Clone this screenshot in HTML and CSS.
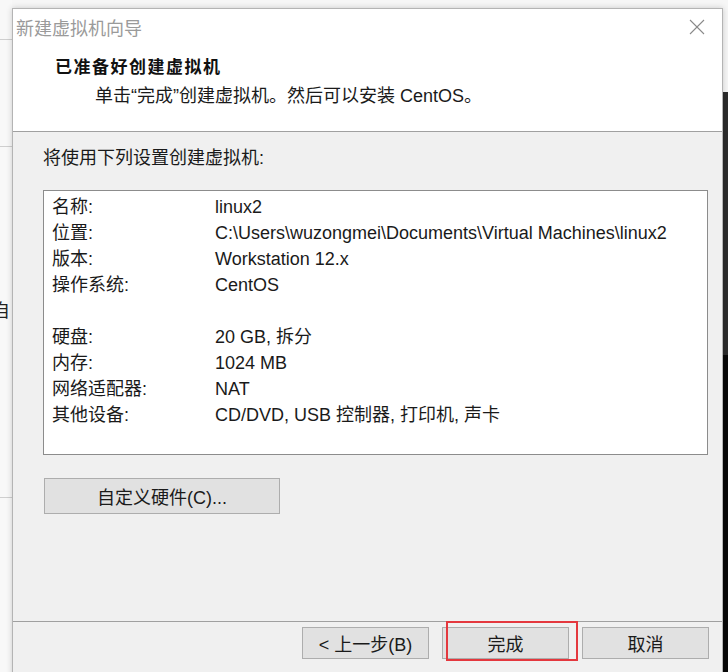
FILE: index.html
```html
<!DOCTYPE html>
<html lang="zh-CN">
<head>
  <meta charset="UTF-8" />
  <meta name="viewport" content="width=device-width, initial-scale=1.0" />
  <title>新建虚拟机向导</title>
  <link rel="stylesheet" href="styles.css">
</head>
<body>
  <div class="desktop">
    <!-- windows behind the wizard -->
    <div class="back-window">
      <div class="back-line l1"></div>
      <div class="back-line l2"></div>
      <div class="back-line l3"></div>
      <div class="back-text">项自</div>
    </div>
    <div class="dark-window">
      <div class="dark-top"></div>
      <div class="dark-bottom"></div>
    </div>

    <div class="dialog">
      <div class="titlebar">
        <span class="title">新建虚拟机向导</span>
        <svg class="close" width="16" height="16" viewBox="0 0 16 16">
          <line x1="1" y1="1" x2="15" y2="15" stroke="#8a8a8a" stroke-width="1.1" />
          <line x1="15" y1="1" x2="1" y2="15" stroke="#8a8a8a" stroke-width="1.1" />
        </svg>
      </div>

      <div class="header">
        <div class="heading">已准备好创建虚拟机</div>
        <div class="subheading">单击“完成”创建虚拟机。然后可以安装 CentOS。</div>
      </div>

      <div class="content">
        <div class="intro">将使用下列设置创建虚拟机:</div>
        <div class="summary">
          <div class="row"><span class="label">名称:</span><span>linux2</span></div>
          <div class="row"><span class="label">位置:</span><span>C:\Users\wuzongmei\Documents\Virtual Machines\linux2</span></div>
          <div class="row"><span class="label">版本:</span><span>Workstation 12.x</span></div>
          <div class="row"><span class="label">操作系统:</span><span>CentOS</span></div>
          <div class="row"></div>
          <div class="row"><span class="label">硬盘:</span><span>20 GB, 拆分</span></div>
          <div class="row"><span class="label">内存:</span><span>1024 MB</span></div>
          <div class="row"><span class="label">网络适配器:</span><span>NAT</span></div>
          <div class="row"><span class="label">其他设备:</span><span>CD/DVD, USB 控制器, 打印机, 声卡</span></div>
        </div>
        <button class="btn custom">自定义硬件(C)...</button>
      </div>

      <div class="footer">
        <button class="btn">&lt; 上一步(B)</button>
        <button class="btn finish">完成<span class="highlight"></span></button>
        <button class="btn">取消</button>
      </div>
    </div>
  </div>
</body>
</html>
```

FILE: styles.css
```css
* {
  box-sizing: border-box;
}
body {
  margin: 0;
  font-family: 'Liberation Sans', 'Noto Sans CJK SC', sans-serif;
  background-color: #f6f6f6;
  color: #1a1a1a;
}
.desktop {
  position: relative;
  width: 728px;
  height: 672px;
  overflow: hidden;
  background-color: #f6f6f6;
}
.back-window {
  position: absolute;
  left: 0;
  top: 0;
  width: 12px;
  height: 672px;
  background-color: #f8f8f8;
}
.back-line {
  position: absolute;
  left: 0;
  width: 12px;
  height: 1px;
  background-color: #cfcfcf;
}
.back-line.l1 { top: 39px; }
.back-line.l2 { top: 146px; }
.back-line.l3 { top: 497px; }
.back-text {
  position: absolute;
  left: -26px;
  top: 296px;
  font-size: 18px;
  color: #222;
}
.dark-window {
  position: absolute;
  left: 723px;
  top: 92px;
  width: 10px;
  height: 580px;
  display: flex;
  flex-direction: column;
}
.dark-top {
  height: 263px;
  background-color: #2c2c2c;
}
.dark-bottom {
  flex: 1;
  background-color: #080808;
}
.dialog {
  position: absolute;
  left: 12px;
  top: 8px;
  width: 711px;
  height: 680px;
  border: 1px solid #b4b4b4;
  background-color: #f0f0f0;
  box-shadow: 0 0 6px rgba(0, 0, 0, 0.18);
  display: flex;
  flex-direction: column;
}
.titlebar {
  height: 36px;
  background-color: white;
  display: flex;
  align-items: center;
  justify-content: space-between;
  padding: 0 17px 0 3px;
}
.title {
  font-size: 18px;
  color: #9a9a9a;
}
.header {
  height: 87px;
  background-color: white;
  border-bottom: 1px solid #a0a0a0;
  padding: 12px 0 0 42px;
}
.heading {
  font-size: 17px;
  font-weight: bold;
  line-height: 22px;
  letter-spacing: 1.5px;
  color: #111;
}
.subheading {
  margin-top: 6px;
  padding-left: 40px;
  font-size: 18px;
  line-height: 22px;
}
.content {
  height: 489px;
  padding: 15px 0 0 30px;
}
.intro {
  font-size: 18px;
  line-height: 22px;
}
.summary {
  margin-top: 21px;
  width: 665px;
  height: 265px;
  background-color: white;
  border: 1px solid #8c8c8c;
  padding: 3px 0 0 8px;
}
.row {
  display: flex;
  height: 26px;
  line-height: 26px;
  font-size: 18px;
}
.label {
  width: 163px;
  flex-shrink: 0;
}
.btn {
  font-family: inherit;
  font-size: 18px;
  color: #1a1a1a;
  background-color: #e1e1e1;
  border: 1px solid #adadad;
  padding: 0;
  cursor: pointer;
}
.custom {
  display: block;
  margin: 23px 0 0 1px;
  width: 236px;
  height: 36px;
}
.footer {
  border-top: 1px solid #a0a0a0;
  display: flex;
  justify-content: flex-end;
  gap: 13px;
  padding: 5px 13px 0 0;
}
.footer .btn {
  width: 127px;
  height: 32px;
}
.finish {
  position: relative;
}
.highlight {
  position: absolute;
  left: 3px;
  top: -7px;
  width: 132px;
  height: 40px;
  border: 2px solid #e4383e;
}
```
